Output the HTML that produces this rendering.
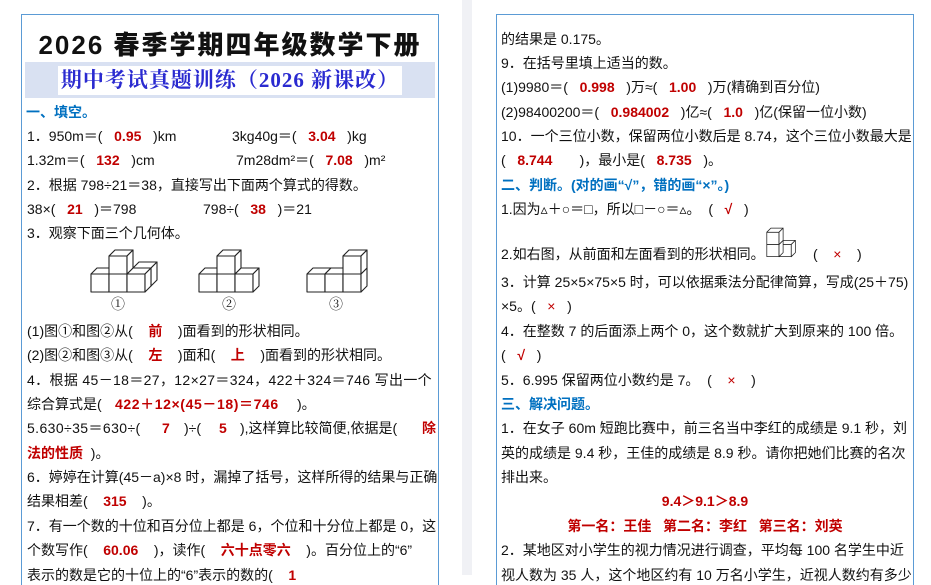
<!DOCTYPE html>
<html><head><meta charset="utf-8"><style>
body{margin:0;width:931px;height:575px;overflow:hidden;background:#fff;position:relative;font-family:"Liberation Sans","Noto Sans CJK SC",sans-serif;font-size:14px;color:#111}
.pg{position:absolute;top:14px;height:570px;border:1px solid #5b9bd5;border-bottom:none}
.l{position:absolute;white-space:pre;line-height:20px;height:20px}
.r{color:#c00000;font-weight:bold}
.b{color:#0070c0;font-weight:bold}
.c{position:absolute;left:497px;width:416px;text-align:center;white-space:pre;line-height:20px}
</style></head><body>
<div style="position:absolute;left:462px;top:0;width:10px;height:575px;background:#f0f1f5"></div>
<div class="pg" style="left:21px;width:416px"></div>
<div class="pg" style="left:496px;width:416px"></div>

<div style="position:absolute;left:22px;top:28px;width:416px;text-align:center;font-family:'Liberation Sans','Noto Sans CJK SC',sans-serif;font-weight:900;font-size:26px;line-height:34px;color:#111;letter-spacing:2px">2026 春季学期四年级数学下册</div>
<div style="position:absolute;left:25px;top:62px;width:410px;height:36px;background:#d9e1f2"></div>
<div style="position:absolute;left:58px;top:66px;width:344px;height:29px;background:#fff;text-align:center;color:#2a2ad0;font-weight:bold;font-size:21px;line-height:29px;font-family:'Liberation Serif','Noto Serif CJK SC',serif;white-space:nowrap;letter-spacing:1px">期中考试真题训练（2026 新课改）</div>

<div class="l b" style="left:26px;top:102px">一、填空。</div>
<div class="l" style="left:27px;top:126px">1．950m＝(   <span class="r">0.95</span>   )km</div>
<div class="l" style="left:232px;top:126px">3kg40g＝(   <span class="r">3.04</span>   )kg</div>
<div class="l" style="left:27px;top:150px">1.32m＝(   <span class="r">132</span>   )cm</div>
<div class="l" style="left:236px;top:150px">7m28dm²＝(   <span class="r">7.08</span>   )m²</div>
<div class="l" style="left:27px;top:175px">2．根据 798÷21＝38，直接写出下面两个算式的得数。</div>
<div class="l" style="left:27px;top:199px">38×(   <span class="r">21</span>   )＝798</div>
<div class="l" style="left:203px;top:199px">798÷(   <span class="r">38</span>   )＝21</div>
<div class="l" style="left:27px;top:223px">3．观察下面三个几何体。</div>

<svg style="position:absolute;left:0;top:0" width="460" height="300">
<defs><g id="c" fill="#fff" stroke="#222" stroke-width="1.1" stroke-linejoin="round"><path d="M0 0H18V-18H0Z"/><path d="M0 -18L6 -24H24L18 -18Z"/><path d="M18 0V-18L24 -24V-6Z"/></g></defs>
<use href="#c" x="133" y="286"/>
<use href="#c" x="91" y="292"/><use href="#c" x="109" y="292"/><use href="#c" x="127" y="292"/><use href="#c" x="109" y="274"/>
<use href="#c" x="199" y="292"/><use href="#c" x="217" y="292"/><use href="#c" x="235" y="292"/><use href="#c" x="217" y="274"/>
<use href="#c" x="307" y="292"/><use href="#c" x="325" y="292"/><use href="#c" x="343" y="292"/><use href="#c" x="343" y="274"/>
</svg>
<div class="l" style="left:111px;top:296px;font-family:'Liberation Serif','Noto Serif CJK SC',serif">①</div>
<div class="l" style="left:222px;top:296px;font-family:'Liberation Serif','Noto Serif CJK SC',serif">②</div>
<div class="l" style="left:329px;top:296px;font-family:'Liberation Serif','Noto Serif CJK SC',serif">③</div>

<div class="l" style="left:27px;top:321px">(1)图①和图②从(    <span class="r">前</span>    )面看到的形状相同。</div>
<div class="l" style="left:27px;top:345px">(2)图②和图③从(    <span class="r">左</span>    )面和(    <span class="r">上</span>    )面看到的形状相同。</div>
<div class="l" style="left:27px;top:370px;letter-spacing:0.35px">4．根据 45－18＝27，12×27＝324，422＋324＝746 写出一个</div>
<div class="l" style="left:27px;top:394px">综合算式是(</div>
<div class="l r" style="left:115px;top:394px;letter-spacing:0.6px">422＋12×(45－18)＝746</div>
<div class="l" style="left:297px;top:394px">)。</div>
<div class="l" style="left:27px;top:418px;letter-spacing:0.4px">5.630÷35＝630÷(</div>
<div class="l r" style="left:162px;top:418px">7</div>
<div class="l" style="left:184px;top:418px">)÷(</div>
<div class="l r" style="left:219px;top:418px">5</div>
<div class="l" style="left:240px;top:418px">),这样算比较简便,依据是(</div>
<div class="l r" style="left:422px;top:418px">除</div>
<div class="l r" style="left:27px;top:443px">法的性质<span style="color:#111;font-weight:normal">  )。</span></div>
<div class="l" style="left:27px;top:467px">6．婷婷在计算(45－a)×8 时，漏掉了括号，这样所得的结果与正确</div>
<div class="l" style="left:27px;top:491px">结果相差(    <span class="r">315</span>    )。</div>
<div class="l" style="left:27px;top:516px">7．有一个数的十位和百分位上都是 6，个位和十分位上都是 0，这</div>
<div class="l" style="left:27px;top:540px">个数写作(    <span class="r">60.06</span>    )，读作(    <span class="r">六十点零六</span>    )。百分位上的“6”</div>
<div class="l" style="left:27px;top:565px">表示的数是它的十位上的“6”表示的数的(    <span class="r">1</span></div>

<div class="l" style="left:501px;top:29px">的结果是 0.175。</div>
<div class="l" style="left:501px;top:53px">9．在括号里填上适当的数。</div>
<div class="l" style="left:501px;top:77px">(1)9980＝(   <span class="r">0.998</span>   )万≈(   <span class="r">1.00</span>   )万(精确到百分位)</div>
<div class="l" style="left:501px;top:102px">(2)98400200＝(   <span class="r">0.984002</span>   )亿≈(   <span class="r">1.0</span>   )亿(保留一位小数)</div>
<div class="l" style="left:501px;top:126px">10．一个三位小数，保留两位小数后是 8.74，这个三位小数最大是</div>
<div class="l" style="left:501px;top:150px">(   <span class="r">8.744</span>       )，最小是(   <span class="r">8.735</span>   )。</div>
<div class="l b" style="left:501px;top:175px">二、判断。(对的画“√”，错的画“×”。)</div>
<div class="l" style="left:501px;top:199px">1.因为▵＋○＝□，所以□－○＝▵。  (   <span class="r">√</span>   )</div>
<svg style="position:absolute;left:760px;top:222px" width="50" height="40">
<g transform="scale(0.68)"><use href="#c" x="28" y="51"/><use href="#c" x="10" y="51"/><use href="#c" x="10" y="33"/></g>
</svg>
<div class="l" style="left:501px;top:244px">2.如右图，从前面和左面看到的形状相同。</div>
<div class="l" style="left:813px;top:244px">(    <span style="color:#c00000">×</span>    )</div>
<div class="l" style="left:501px;top:272px">3．计算 25×5×75×5 时，可以依据乘法分配律简算，写成(25＋75)</div>
<div class="l" style="left:501px;top:296px">×5。(   <span style="color:#c00000">×</span>   )</div>
<div class="l" style="left:501px;top:321px">4．在整数 7 的后面添上两个 0，这个数就扩大到原来的 100 倍。</div>
<div class="l" style="left:501px;top:345px">(   <span class="r">√</span>   )</div>
<div class="l" style="left:501px;top:370px">5．6.995 保留两位小数约是 7。  (    <span style="color:#c00000">×</span>    )</div>
<div class="l b" style="left:501px;top:394px">三、解决问题。</div>
<div class="l" style="left:501px;top:418px">1．在女子 60m 短跑比赛中，前三名当中李红的成绩是 9.1 秒，刘</div>
<div class="l" style="left:501px;top:443px">英的成绩是 9.4 秒，王佳的成绩是 8.9 秒。请你把她们比赛的名次</div>
<div class="l" style="left:501px;top:467px">排出来。</div>
<div class="c r" style="top:491px">9.4＞9.1＞8.9</div>
<div class="c r" style="top:516px">第一名：王佳   第二名：李红   第三名：刘英</div>
<div class="l" style="left:501px;top:540px">2．某地区对小学生的视力情况进行调查，平均每 100 名学生中近</div>
<div class="l" style="left:501px;top:565px">视人数为 35 人，这个地区约有 10 万名小学生，近视人数约有多少</div>
</body></html>
